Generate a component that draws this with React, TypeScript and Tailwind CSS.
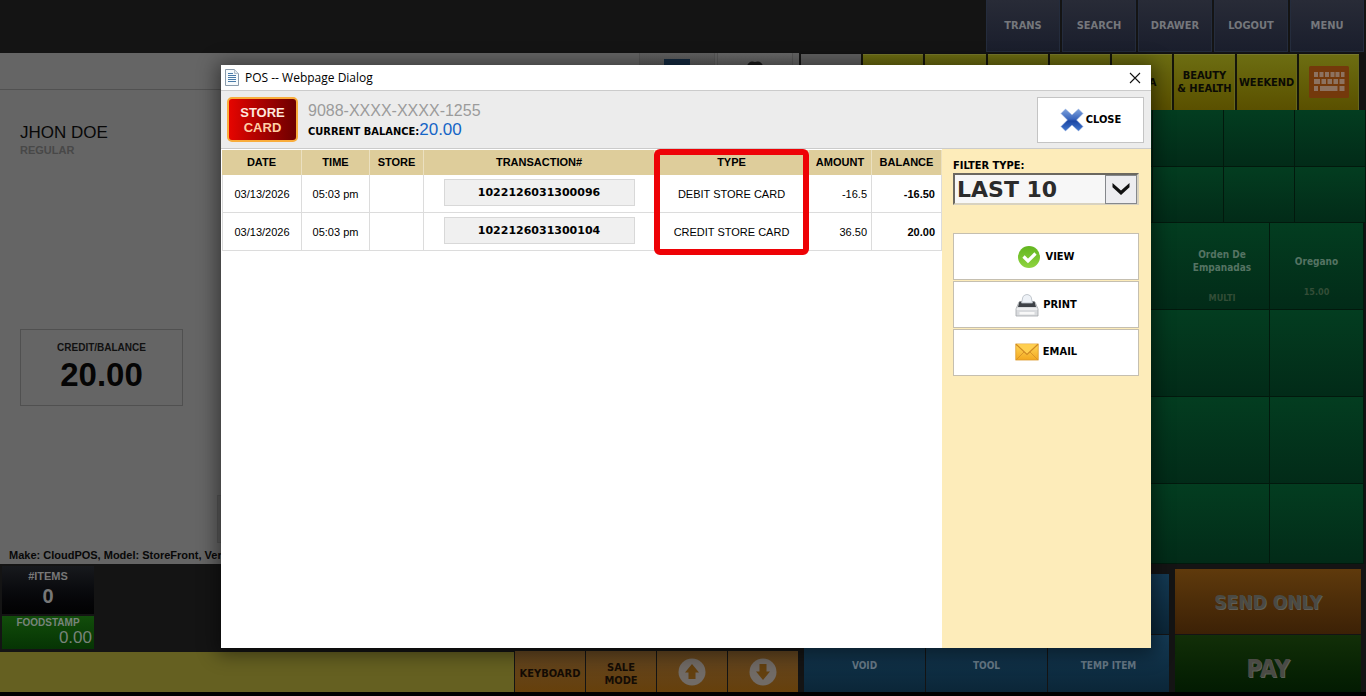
import React from "react";

const tahoma = "font-['DejaVu_Sans_Condensed','DejaVu_Sans',sans-serif]";
const arial = "font-['Liberation_Sans',Arial,sans-serif]";

const topActions = ["TRANS", "SEARCH", "DRAWER", "LOGOUT", "MENU"];

const transactions = [
  { date: "03/13/2026", time: "05:03 pm", store: "", id: "1022126031300096", type: "DEBIT STORE CARD", amount: "-16.5", balance: "-16.50" },
  { date: "03/13/2026", time: "05:03 pm", store: "", id: "1022126031300104", type: "CREDIT STORE CARD", amount: "36.50", balance: "20.00" },
];

function KeyboardIcon() {
  return (
    <svg width="40" height="32" viewBox="0 0 40 32" aria-hidden="true">
      <rect width="40" height="32" rx="1.5" fill="#74390b" />
      <g fill="#8d7260">
        <path d="M5 6h4v5H5zM10.500 6h4v5h-4zM16 6h4v5h-4zM21.500 6h4v5h-4zM26.500 6h4v5h-4zM32 6h3.500v5H32z" />
        <path d="M5 13h6v5H5zM12.500 13h4.500v5h-4.500zM18.500 13H23v5h-4.500zM24.500 13H29v5h-4.500zM30.500 13h5v5h-5z" />
        <path d="M5 20h4v5H5zM11 20h17.500v5H11zM30.500 20h5v5h-5z" />
      </g>
    </svg>
  );
}

function CrossIcon() {
  return (
    <svg width="24" height="24" viewBox="0 0 24 24" aria-hidden="true">
      <defs>
        <linearGradient id="cross" x1="0" y1="0" x2="0" y2="1">
          <stop offset="0" stopColor="#7ea2dc" />
          <stop offset=".45" stopColor="#3a66bd" />
          <stop offset=".55" stopColor="#1c47a4" />
          <stop offset="1" stopColor="#4378cf" />
        </linearGradient>
      </defs>
      <path d="M5.500 1 12 7l6.500-6 4.500 4.500-6.500 6.500 6.500 6.500-4.500 4.500L12 17l-6.500 6L1 18.500 7.500 12 1 5.500z" fill="url(#cross)" stroke="#8fabdd" strokeWidth=".5" />
    </svg>
  );
}

function CheckIcon() {
  return (
    <svg width="24" height="24" viewBox="0 0 24 24" aria-hidden="true">
      <defs>
        <linearGradient id="check" x1="0" y1="0" x2="0" y2="1">
          <stop offset="0" stopColor="#62b51f" />
          <stop offset="1" stopColor="#8fd43f" />
        </linearGradient>
      </defs>
      <circle cx="12" cy="12" r="11" fill="url(#check)" />
      <path d="M6.500 11.500 11 16l7.500-7.500" fill="none" stroke="#fff" strokeWidth="3.200" />
    </svg>
  );
}

function PrinterIcon() {
  return (
    <svg width="24" height="24" viewBox="0 0 24 24" aria-hidden="true">
      <path d="M4 9h16l3 7v7H1v-7z" fill="#d9dbde" stroke="#a5a8ac" strokeWidth=".8" />
      <path d="M4.500 8.500h15l1.500 5.500H3z" fill="#3d4146" />
      <path d="M6.500 10 8 3.500Q12-.5 16 3.500l1.500 6.500z" fill="#eef2f7" stroke="#b4bac2" strokeWidth=".8" />
      <path d="M1.500 16h21" stroke="#fff" strokeWidth="1" />
      <path d="M4.500 19h15v2.500h-15z" fill="#f8f8f8" />
    </svg>
  );
}

function EnvelopeIcon() {
  return (
    <svg width="24" height="24" viewBox="0 0 24 24" aria-hidden="true">
      <defs>
        <linearGradient id="mail" x1="0" y1="0" x2="0" y2="1">
          <stop offset="0" stopColor="#ffd75a" />
          <stop offset="1" stopColor="#f3a81f" />
        </linearGradient>
      </defs>
      <rect x=".8" y="3" width="22.400" height="16" fill="url(#mail)" stroke="#dc9a2b" strokeWidth=".8" />
      <path d="m1 19 8.500-8.500M23 19l-8.500-8.500" stroke="#d9952a" strokeWidth="1" />
      <path d="M1 3.300 12 13.500 23 3.300" fill="#ffcf50" stroke="#d08a22" strokeWidth="1.200" />
    </svg>
  );
}

function PageIcon() {
  return (
    <svg width="14" height="17" viewBox="0 0 14 17" aria-hidden="true">
      <path d="M.5.500h9L13.500 4.500v12H.5z" fill="#f6fafc" stroke="#8a9bab" />
      <path d="M9.500.500v4h4" fill="#dfe8ee" stroke="#a5b3bf" strokeWidth=".8" />
      <path d="M3 4.500h5M3 6.500h8M3 8.500h8M3 10.500h8M3 12.500h8" stroke="#4a7ba8" />
    </svg>
  );
}

function ArrowCircle({ down = false }: { down?: boolean }) {
  return (
    <svg width="28" height="28" viewBox="0 0 28 28" aria-hidden="true">
      <circle cx="14" cy="14" r="13.500" fill="#716b66" />
      <path
        d={down ? "M10.500 6h7v7.500H21L14 22l-7-8.500h3.500z" : "M14 6l7 8.500h-3.500V21h-7v-6.500H7z"}
        fill="#64410f"
      />
    </svg>
  );
}

function TopBar() {
  return (
    <header className="flex h-[53px] justify-end gap-0.5 bg-[#141414] pr-0.5">
      {topActions.map((label) => (
        <button
          key={label}
          className={`${tahoma} mb-px w-[74px] border border-t-0 border-[#242c3d] bg-linear-to-b from-[#282b37] to-[#1a1e2c] pt-0.5 text-[11px] font-bold text-[#75777c]`}
        >
          {label}
        </button>
      ))}
    </header>
  );
}

function CustomerPanel() {
  return (
    <section className={`${arial} flex min-w-0 flex-1 flex-col bg-[#656565]`}>
      <div className="flex h-[37px] justify-end gap-0.5 border-b border-[#515151] pr-1.5">
        <button aria-label="Card" className="flex w-[76px] items-start justify-center border-x border-[#585858] bg-linear-to-b from-[#616161] to-[#505050] pt-1.5">
          <svg width="26" height="18" viewBox="0 0 26 18"><rect width="26" height="18" fill="#14293f" /></svg>
        </button>
        <button aria-label="Customer" className="flex w-[76px] items-start justify-center border-x border-[#585858] bg-linear-to-b from-[#686868] to-[#555] pt-2">
          <svg width="18" height="18" viewBox="0 0 18 18"><path d="M1 5Q3-1 9 1q6-2 8 4v9H1z" fill="#191919" /></svg>
        </button>
      </div>
      <div className="flex flex-1 flex-col items-start pt-8">
        <h1 className="ml-5 text-[17px] leading-[22px] text-[#080808]">JHON DOE</h1>
        <p className="ml-5 text-[11px] leading-3 font-bold text-[#484848]">REGULAR</p>
        <div className="mt-[173px] ml-5 flex h-[77px] w-[163px] flex-col items-center border border-[#505050] pt-[11px]">
          <span className="text-[10px] leading-[14px] font-bold text-[#111]">CREDIT/BALANCE</span>
          <span className="text-[33px] leading-10 font-bold text-[#050505]">20.00</span>
        </div>
        <div className="mt-auto mb-1 ml-[217px] h-12 w-96 border border-[#555] bg-[#5c5c5c]" />
        <p className="mb-px ml-[9px] text-[11px] leading-4 font-bold whitespace-nowrap text-[#080808]">
          Make: CloudPOS, Model: StoreFront, Ver.
        </p>
      </div>
    </section>
  );
}

const categoryTile =
  "flex items-center border-l-2 border-[#15150a] bg-linear-to-b from-[#6d6e12] to-[#5a5000] text-[11px] leading-[13px] font-bold text-[#0b0b05] shadow-[inset_0_1px_0_#77782c,inset_-1px_0_0_#67681c]";
const greenTile = "border-r border-b border-[#02190d] bg-linear-to-b from-[#033d20] to-[#022b18]";

function ProductPanel() {
  return (
    <section className={`${tahoma} flex w-[567px] shrink-0 flex-col bg-[#121212]`}>
      <div className="grid h-[57px] grid-cols-9 pt-px pr-[7px]">
        <div className="border-l-2 border-[#151515] bg-[#5f5f5f]" />
        {[1, 2, 3, 4].map((n) => (
          <div key={n} className={categoryTile} />
        ))}
        <button className={`${categoryTile} justify-end pr-4`}>A</button>
        <button className={`${categoryTile} justify-center whitespace-nowrap`}>BEAUTY<br />&amp; HEALTH</button>
        <button className={`${categoryTile} justify-center`}>WEEKEND</button>
        <button aria-label="Keyboard" className={`${categoryTile} justify-center`}><KeyboardIcon /></button>
      </div>
      <div className="grid h-[113px] grid-cols-8 grid-rows-2">
        {Array.from({ length: 16 }, (_, n) => (
          <div key={n} className={greenTile} />
        ))}
      </div>
      <div className="grid flex-1 grid-cols-[1fr_94px] grid-rows-[87px_87px_87px_1fr] pr-0.5">
        <button className={`${greenTile} flex justify-end`}>
          <span className="flex w-[94px] flex-col items-center justify-center pt-5 text-[10px] leading-[13px] font-bold text-[#557363]">
            <span>Orden De<br />Empanadas</span>
            <span className="mt-[18px] text-[9px] text-[#334d37]">MULTI</span>
          </span>
        </button>
        <button className={`${greenTile} flex flex-col items-center pt-8 text-[10px] leading-[13px] font-bold text-[#557363]`}>
          <span>Oregano</span>
          <span className="mt-[18px] text-[9px] text-[#334d37]">15.00</span>
        </button>
        {[0, 1, 2, 3, 4, 5].map((n) => (
          <div key={n} className={greenTile} />
        ))}
      </div>
    </section>
  );
}

const orangeButton =
  "flex w-[70px] items-center justify-center bg-linear-to-b from-[#624520] to-[#66400b] text-[11px] leading-[13px] font-bold text-[#140c05]";
const orangeText = "pt-1";
const blueButton =
  "flex justify-center bg-linear-to-b from-[#143a54] to-[#0b2638] text-[10px] leading-[13px] font-bold text-[#667885]";

function BottomBar() {
  return (
    <footer className="flex h-[132px] shrink-0 border-b-4 border-black bg-[#141414]">
      <div className="flex min-w-0 flex-1 flex-col">
        <div className={`${arial} ml-0.5 flex h-[87px] w-[92px] flex-col gap-0.5 pt-0.5 pb-0.5`}>
          <div className="flex h-12 flex-col items-center bg-linear-to-b from-[#17191d] to-[#020203] pt-0.5 font-bold text-[#777]">
            <span className="text-[11px] leading-4">#ITEMS</span>
            <span className="text-[20px] leading-6">0</span>
          </div>
          <div className="flex flex-1 flex-col bg-linear-to-b from-[#124d0b] to-[#063404] text-[#78837a]">
            <span className="self-center text-[10px] leading-[14px] font-bold">FOODSTAMP</span>
            <span className="self-end pr-0.5 text-[17px] leading-4">0.00</span>
          </div>
        </div>
        <div className={`${tahoma} flex flex-1 gap-px`}>
          <div className="mt-px flex-1 bg-[#656021]" />
          <button className={`${orangeButton} ${orangeText}`}>KEYBOARD</button>
          <button className={`${orangeButton} ${orangeText}`}>SALE<br />MODE</button>
          <button aria-label="Scroll up" className={orangeButton}><ArrowCircle /></button>
          <button aria-label="Scroll down" className={orangeButton}><ArrowCircle down /></button>
        </div>
      </div>
      <div className={`${tahoma} flex w-[568px] shrink-0 gap-1.5 pr-[5px] pl-1.5`}>
        <div className="grid flex-1 grid-cols-3 grid-rows-[60px_1fr] gap-px pt-2.5">
          <div className={blueButton} />
          <div className={blueButton} />
          <div className={blueButton} />
          <button className={`${blueButton} pt-6`}>VOID</button>
          <button className={`${blueButton} pt-6`}>TOOL</button>
          <button className={`${blueButton} pt-6`}>TEMP ITEM</button>
        </div>
        <div className="grid w-[186px] grid-rows-[65px_1fr] gap-px pt-[5px] font-bold text-[#4a4a44]">
          <button className="bg-linear-to-b from-[#5f3a0c] to-[#3c2106] pt-0.5 text-[19px] [text-shadow:1px_1px_0_#625d54]">SEND ONLY</button>
          <button className="bg-linear-to-b from-[#122f08] to-[#031b02] pt-2.5 text-[24px] [text-shadow:1px_1px_0_#5a6056]">PAY</button>
        </div>
      </div>
    </footer>
  );
}

const headCell = "h-[25px] border-r border-[#ebe0c0] p-0 text-center align-middle";
const bodyCell = "h-[38px] border-r border-b border-[#dcdcdc] p-0 pt-0.5 text-center";
const sideButton =
  "flex h-[47px] w-full items-center justify-center gap-1 border border-[#c5bfb0] bg-white text-[11px] font-bold text-black";

function StoreCardDialog() {
  return (
    <div
      role="dialog"
      aria-label="POS -- Webpage Dialog"
      className="absolute top-[65px] right-[215px] bottom-12 left-[221px] flex flex-col bg-white text-black shadow-[0_2px_18px_4px_rgba(0,0,0,0.45)]"
    >
      <div className="flex h-[25px] shrink-0 items-center gap-1.5 pr-2 pl-1">
        <PageIcon />
        <span className="font-['Open_Sans','Noto_Sans',sans-serif] text-[12px] leading-4">POS -- Webpage Dialog</span>
        <button aria-label="Close window" className="ml-auto flex h-4 w-4 items-center justify-center">
          <svg width="12" height="12" viewBox="0 0 12 12"><path d="m1 1 10 10M11 1 1 11" stroke="#111" strokeWidth="1.100" /></svg>
        </button>
      </div>

      <div className={`${arial} flex h-[59px] shrink-0 items-center border-y border-[#cbcbcb] bg-[#ececec] pr-[7px] pl-1.5`}>
        <div className="flex h-[45px] w-[71px] flex-col items-center justify-center rounded-[5px] border-2 border-[#f9ad3c] bg-linear-to-r from-[#e60500] to-[#6d0000] text-[13px] leading-[15px] font-bold text-[#ffe9df]">
          <span>STORE</span>
          <span className="text-[#ffcfa5]">CARD</span>
        </div>
        <div className="ml-2.5 pt-1">
          <p className="text-[16px] leading-[18px] text-[#9b9b9b]">9088-XXXX-XXXX-1255</p>
          <p className="flex items-baseline leading-[19px]">
            <span className={`${tahoma} text-[11px] font-bold`}>CURRENT BALANCE:</span>
            <span className="text-[17px] text-[#1565c6]">20.00</span>
          </p>
        </div>
        <button className={`${tahoma} ml-auto flex h-[46px] w-[107px] items-center justify-center gap-0.5 border border-[#c4c4c4] bg-white text-[11px] font-bold`}>
          <CrossIcon />
          <span className="pt-0.5">CLOSE</span>
        </button>
      </div>

      <div className="flex min-h-0 flex-1">
        <div className="relative min-w-0 flex-1 pt-px pl-px">
          <table className={`${arial} w-full table-fixed border-separate border-spacing-0 text-[11px]`}>
            <colgroup>
              <col className="w-20" />
              <col className="w-[68px]" />
              <col className="w-[54px]" />
              <col />
              <col className="w-[154px]" />
              <col className="w-[63px]" />
              <col className="w-[70px]" />
            </colgroup>
            <thead className="bg-[#decd9b] font-bold">
              <tr>
                <th scope="col" className={headCell}>DATE</th>
                <th scope="col" className={headCell}>TIME</th>
                <th scope="col" className={headCell}>STORE</th>
                <th scope="col" className={headCell}>TRANSACTION#</th>
                <th scope="col" className={headCell}>TYPE</th>
                <th scope="col" className={headCell}>AMOUNT</th>
                <th scope="col" className={headCell}>BALANCE</th>
              </tr>
            </thead>
            <tbody>
              {transactions.map((t) => (
                <tr key={t.id}>
                  <td className={`${bodyCell} border-l`}>{t.date}</td>
                  <td className={bodyCell}>{t.time}</td>
                  <td className={bodyCell}>{t.store}</td>
                  <td className="h-[38px] border-r border-b border-[#dcdcdc] p-0 pb-0.5 text-center">
                    <button className="mx-auto block h-[27px] w-[191px] border border-[#d8d8d8] bg-[#f0f0f0] pt-px font-['DejaVu_Sans',sans-serif] text-[11px] leading-6 font-bold">
                      {t.id}
                    </button>
                  </td>
                  <td className={bodyCell}>{t.type}</td>
                  <td className={bodyCell}><div className="pr-1 text-right">{t.amount}</div></td>
                  <td className={bodyCell}><div className="pr-1.5 text-right font-bold">{t.balance}</div></td>
                </tr>
              ))}
            </tbody>
          </table>
          <div className="pointer-events-none absolute top-0 right-[133px] h-[106px] w-[155px] rounded-md border-[6px] border-[#ee0206]" />
        </div>

        <aside className={`${tahoma} w-[209px] shrink-0 bg-[#fdecba] pt-2 pr-3 pl-[11px]`}>
          <label htmlFor="filter" className="block pt-0.5 text-[11px] leading-[14px] font-bold">FILTER TYPE:</label>
          <div className="relative h-8">
            <select
              id="filter"
              defaultValue="LAST 10"
              className="h-full w-full appearance-none border-2 border-t-[#6b6860] border-r-[#d8d2c0] border-b-[#d8d2c0] border-l-[#6b6860] bg-[#f7f7f7] pt-0.5 pl-0.5 font-['DejaVu_Sans',sans-serif] text-[22px] leading-[26px] font-bold text-[#2b2b2b]"
            >
              <option>LAST 10</option>
            </select>
            <span className="pointer-events-none absolute top-0.5 right-0.5 bottom-px flex w-8 items-center justify-center border border-[#85888c] bg-[#ededf0]">
              <svg width="20" height="14" viewBox="0 0 20 14" aria-hidden="true"><path d="M1.500 0v4.200L10 12l8.500-7.800V0L10 7.500z" fill="#111" /></svg>
            </span>
          </div>
          <div className="mt-7 flex flex-col gap-px">
            <button className={sideButton}><CheckIcon /><span className="pt-0.5">VIEW</span></button>
            <button className={sideButton}><PrinterIcon /><span className="pt-0.5">PRINT</span></button>
            <button className={sideButton}><EnvelopeIcon /><span>EMAIL</span></button>
          </div>
        </aside>
      </div>
    </div>
  );
}

export default function App() {
  return (
    <main className="relative flex min-h-screen flex-col overflow-hidden bg-[#121212]">
      <TopBar />
      <div className="flex flex-1">
        <CustomerPanel />
        <ProductPanel />
      </div>
      <BottomBar />
      <StoreCardDialog />
    </main>
  );
}
